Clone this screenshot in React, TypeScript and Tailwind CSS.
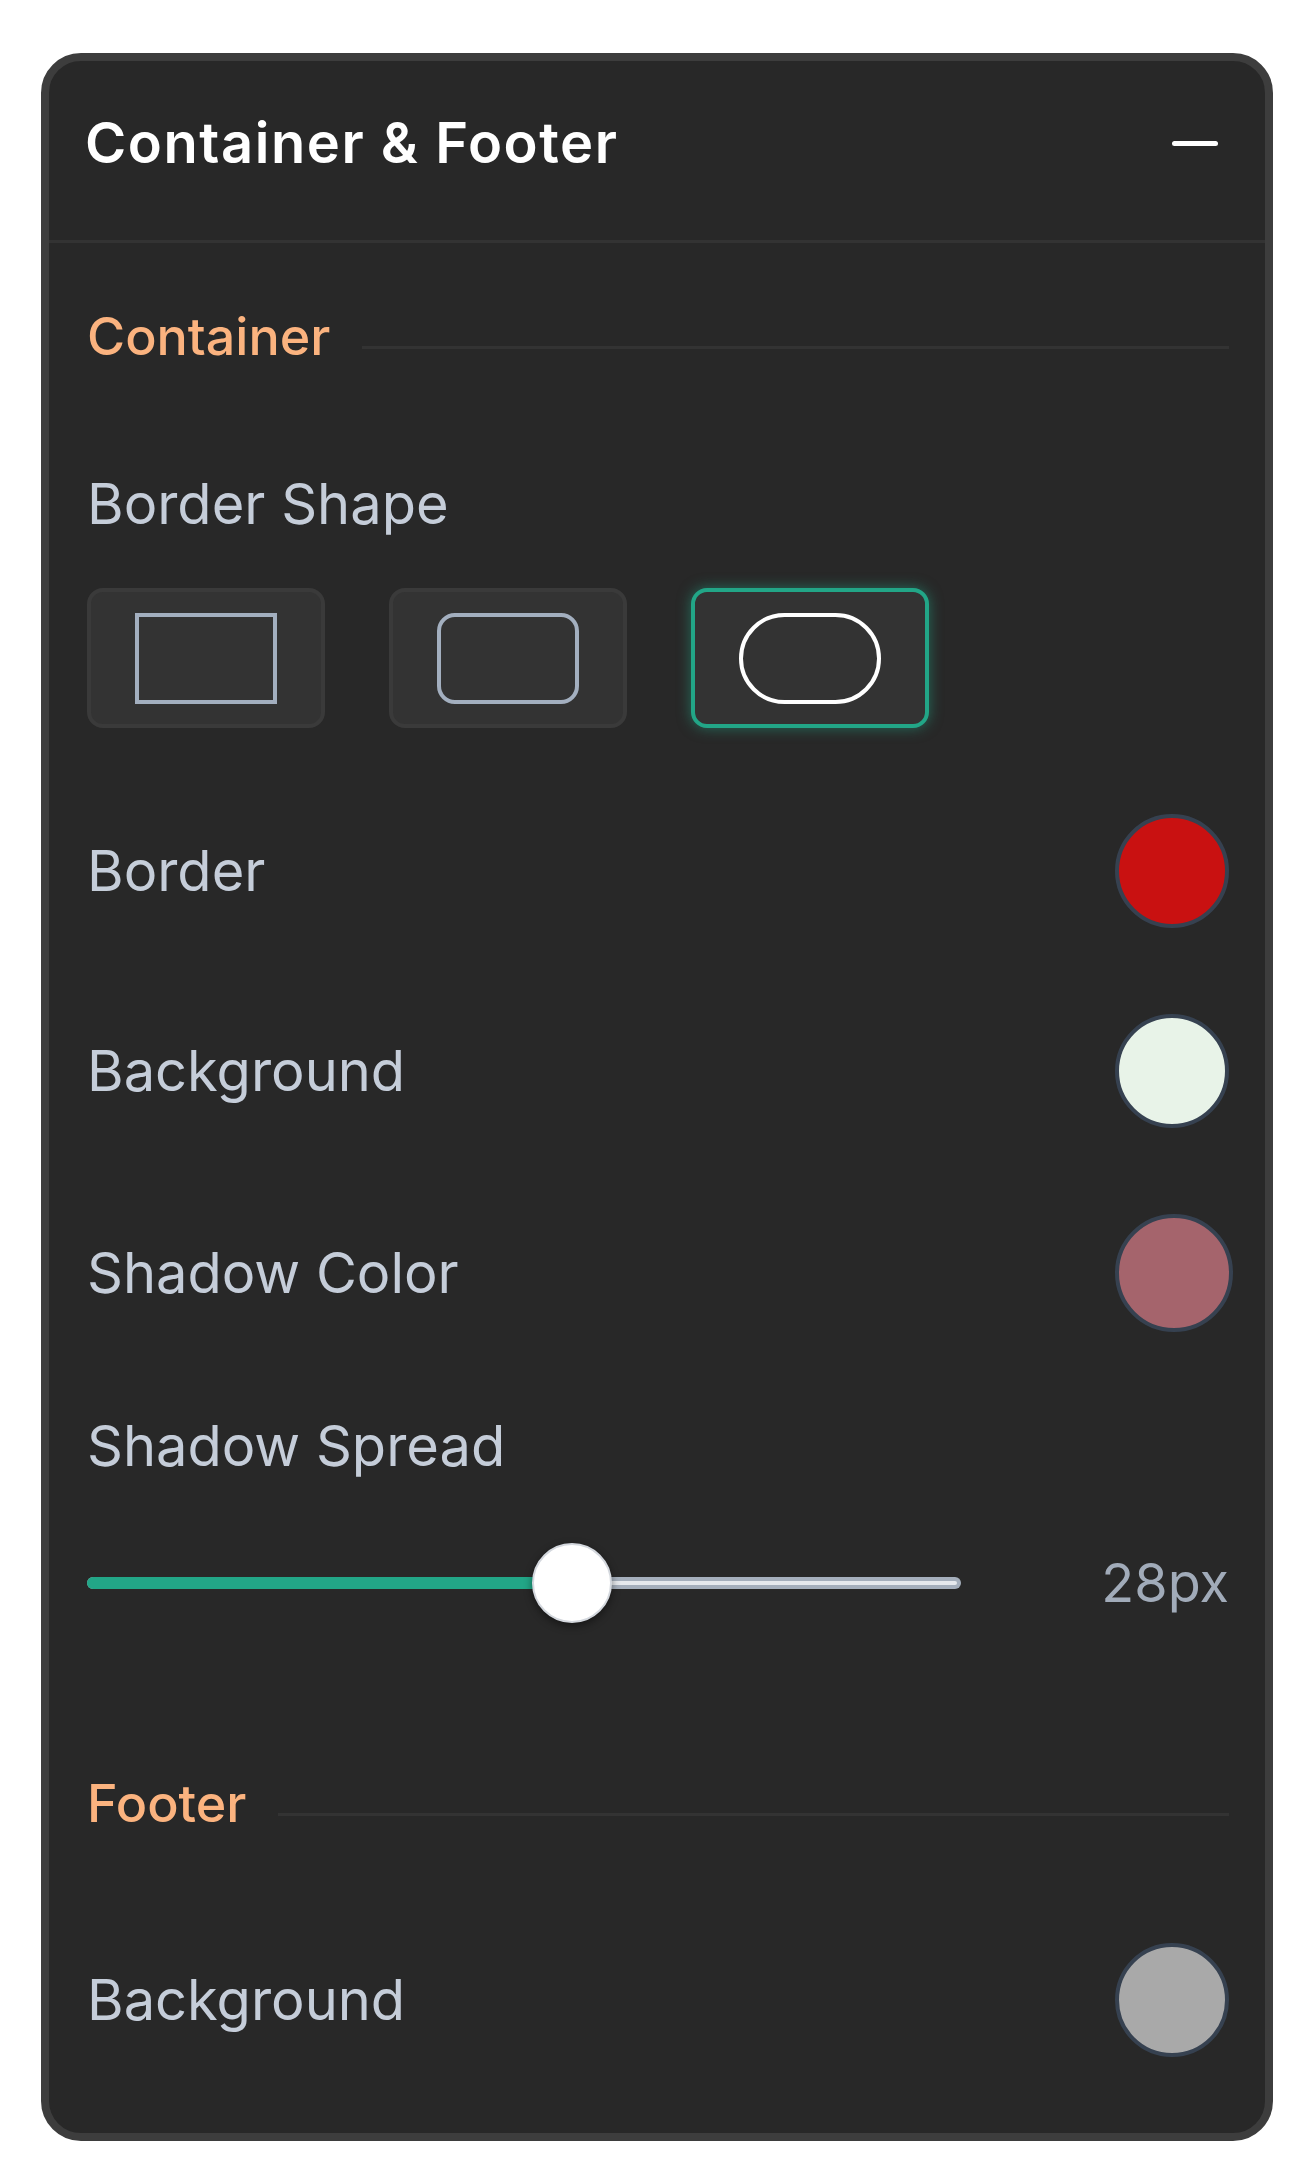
import { useState } from 'react';

type Shape = 'square' | 'rounded' | 'pill';

const shapes: { id: Shape; inner: string }[] = [
  { id: 'square', inner: 'rounded-none' },
  { id: 'rounded', inner: 'rounded-[18px]' },
  { id: 'pill', inner: 'rounded-full' },
];

const SectionLabel = ({ title }: { title: string }) => (
  <div className="flex items-center gap-8">
    <span className="text-[52px] font-medium leading-none text-[#fbb37f]">{title}</span>
    <div className="mt-[20px] h-[3px] flex-1 bg-[#333333]" />
  </div>
);

const ColorRow = ({ label, color, size = 'h-[114px] w-[114px]' }: { label: string; color: string; size?: string }) => (
  <div className="flex items-center justify-between">
    <span className="text-[56px] leading-none text-[#c5cdd9]">{label}</span>
    <div className={`${size} rounded-full border-[4px] border-[#364150]`} style={{ backgroundColor: color }} />
  </div>
);

const App = () => {
  const [shape, setShape] = useState<Shape>('pill');
  const spread = 28;
  const pct = spread / 50;

  return (
    <div className="min-h-screen bg-white pl-[41px] pt-[53px] font-['Inter',sans-serif]">
      <div className="w-[1232px] overflow-hidden rounded-[40px] border-[8px] border-[#3d3d3d] bg-[#282828]">
        {/* Header */}
        <div className="flex items-center justify-between pb-[69px] pl-[36px] pr-[47px] pt-[54px]">
          <h2 className="text-[56px] font-semibold leading-none tracking-[0.028em] text-white">
            Container &amp; Footer
          </h2>
          <div className="h-[5px] w-[46px] rounded-sm bg-white" />
        </div>
        <div className="h-[3px] bg-[#333333]" />

        <div className="flex flex-col pb-[76px] pl-[38px] pr-[36px] pt-[68px]">
          <SectionLabel title="Container" />

          <span className="mt-[113px] text-[56px] leading-none text-[#c5cdd9]">Border Shape</span>

          <div className="mt-[56px] flex gap-[64px]">
            {shapes.map((s) => {
              const active = shape === s.id;
              return (
                <button
                  key={s.id}
                  onClick={() => setShape(s.id)}
                  className={`flex h-[140px] w-[238px] items-center justify-center rounded-[16px] border-[4px] bg-[#333333] ${
                    active ? 'border-[#22a687] shadow-[0_0_14px_rgba(34,166,135,0.55)]' : 'border-[#3a3a3a]'
                  }`}
                >
                  <div
                    className={`h-[91px] w-[142px] border-[4px] ${s.inner} ${
                      active ? 'border-white' : 'border-[#a3afbf]'
                    }`}
                  />
                </button>
              );
            })}
          </div>

          <div className="mt-[86px] flex flex-col gap-[86px]">
            <ColorRow label="Border" color="#c91111" />
            <ColorRow label="Background" color="#e8f3e8" />
            <ColorRow label="Shadow Color" color="#a5646c" size="h-[118px] w-[118px] -mr-[4px]" />
          </div>

          <span className="mt-[86px] text-[56px] leading-none text-[#c5cdd9]">Shadow Spread</span>

          <div className="mt-[69px] flex h-[80px] items-center">
            <div className="relative h-[12px] flex-1 rounded-full bg-[#a5afbc]">
              <div className="absolute inset-x-[4px] top-[4px] h-[4px] rounded-full bg-[#e6e9ed]" />
              <div
                className="absolute inset-y-0 left-0 rounded-full bg-[#22a687]"
                style={{ width: `calc(${pct} * (100% - 80px) + 40px)` }}
              />
              <div
                className="absolute top-1/2 h-[80px] w-[80px] -translate-y-1/2 rounded-full border-[2px] border-[#d4d8de] bg-white shadow-[0_3px_8px_rgba(0,0,0,0.45)]"
                style={{ left: `calc(${pct} * (100% - 80px))` }}
              />
            </div>
            <span className="w-[268px] text-right text-[54px] leading-none text-[#a1abb9]">{spread}px</span>
          </div>

          <div className="mt-[155px]">
            <SectionLabel title="Footer" />
          </div>

          <div className="mt-[113px]">
            <ColorRow label="Background" color="#a9a9a9" />
          </div>
        </div>
      </div>
    </div>
  );
};

export default App;
